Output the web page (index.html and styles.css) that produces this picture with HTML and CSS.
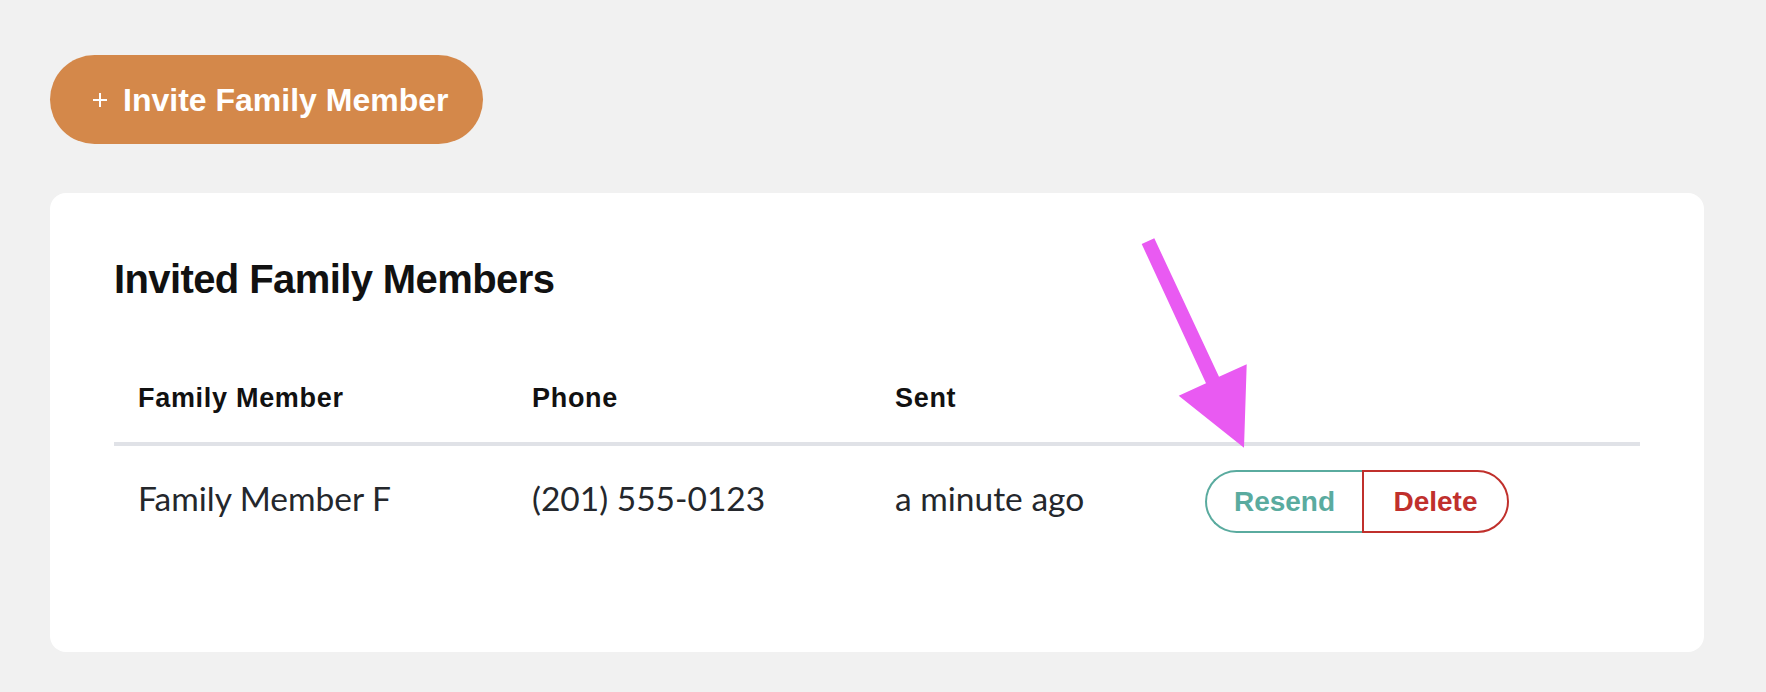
FILE: index.html
```html
<!DOCTYPE html>
<html lang="en">
<head>
<meta charset="utf-8">
<title>Invited Family Members</title>
<link rel="stylesheet" href="styles.css">
</head>
<body>
<div class="page">
  <button class="invite-btn" type="button">
    <svg class="plus" width="16" height="16" viewBox="0 0 16 16" aria-hidden="true"><path d="M8 1v14M1 8h14" stroke="#fff" stroke-width="2" fill="none"/></svg>
    <span>Invite Family Member</span>
  </button>

  <section class="card">
    <h2 class="card-title">Invited Family Members</h2>
    <div class="table">
      <div class="row head">
        <div class="cell">Family Member</div>
        <div class="cell">Phone</div>
        <div class="cell">Sent</div>
        <div class="cell"></div>
      </div>
      <div class="row body">
        <div class="cell">Family Member F</div>
        <div class="cell">(201) 555-0123</div>
        <div class="cell">a minute ago</div>
        <div class="cell">
          <div class="btn-group">
            <button class="pill resend" type="button">Resend</button>
            <button class="pill delete" type="button">Delete</button>
          </div>
        </div>
      </div>
    </div>
  </section>

  <svg class="arrow" width="1766" height="692" viewBox="0 0 1766 692" aria-hidden="true">
    <polygon fill="#e95af2" points="1141.7,244 1154.3,238.3 1219,376.7 1246.7,364.3 1244,447.7 1178.7,395.7 1206,383.3"/>
  </svg>
</div>
</body>
</html>
```

FILE: styles.css
```css
* { box-sizing: border-box; }

html, body {
  margin: 0;
  padding: 0;
  background: #f1f1f1;
}

body {
  font-family: "Liberation Sans", Arial, sans-serif;
  color: #111;
  width: 1766px;
  height: 692px;
  overflow: hidden;
}

.page {
  position: relative;
  padding: 55px 62px 0 50px;
}

.invite-btn {
  display: flex;
  align-items: center;
  gap: 15px;
  height: 89px;
  padding: 0 35px 0 42px;
  border: none;
  border-radius: 45px;
  background: #d4884a;
  color: #fff;
  font-family: "Liberation Sans", Arial, sans-serif;
  font-weight: 700;
  font-size: 32px;
  line-height: 1;
  cursor: pointer;
}

.plus { flex: none; }

.card {
  margin-top: 49px;
  background: #fff;
  border-radius: 16px;
  padding: 62px 64px 95px;
}

.card-title {
  margin: 0 0 52px;
  font-size: 40px;
  line-height: 48px;
  font-weight: 700;
  letter-spacing: -0.6px;
  color: #111;
}

.row {
  display: grid;
  grid-template-columns: 394px 363px 310px 1fr;
  align-items: center;
}

.cell {
  padding: 0 24px;
}

.row.head {
  padding: 27px 0 28px;
  border-bottom: 4px solid #e0e2e7;
}

.row.head .cell {
  font-size: 27px;
  line-height: 32px;
  font-weight: 700;
  letter-spacing: 0.7px;
  color: #111;
}

.row.body {
  padding: 24px 0;
}

.row.body .cell {
  font-family: Lato, "Liberation Sans", sans-serif;
  font-size: 33.5px;
  line-height: 38px;
  color: #24272c;
  padding-bottom: 8px;
}

.row.body .cell:last-child {
  padding-bottom: 0;
}

.btn-group {
  display: flex;
}

.pill {
  height: 63px;
  padding: 0;
  background: #fff;
  font-family: "Liberation Sans", Arial, sans-serif;
  font-weight: 700;
  font-size: 28px;
  line-height: 1;
  cursor: pointer;
}

.pill.resend {
  width: 157px;
  color: #5aab9f;
  border: 2px solid #5aab9f;
  border-right: none;
  border-radius: 32px 0 0 32px;
}

.pill.delete {
  width: 147px;
  color: #c0302c;
  border: 2px solid #c0302c;
  border-radius: 0 32px 32px 0;
}

.arrow {
  position: absolute;
  left: 0;
  top: 0;
  pointer-events: none;
}
```
